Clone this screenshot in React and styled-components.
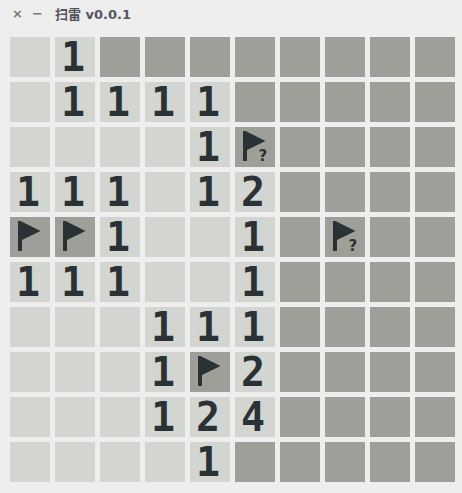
import React from 'react';
import styled, { createGlobalStyle } from 'styled-components';

const Global = createGlobalStyle`
  html, body { margin: 0; padding: 0; background: #eeeeee; }
`;

const Window = styled.div`
  width: 462px;
  height: 493px;
  overflow: hidden;
  background: #eeeeee;
`;

const TitleBar = styled.div`
  height: 37px;
  padding: 0 0 10px 12px;
  box-sizing: border-box;
  display: flex;
  align-items: center;
  color: #555560;
  font-family: "DejaVu Sans", "Noto Sans CJK SC", sans-serif;
`;

const Control = styled.span`
  width: 20px;
  font-size: 13px;
  font-weight: bold;
  color: #777;
  line-height: 1;
`;

const Title = styled.span`
  margin-left: 3px;
  font-size: 13px;
  font-weight: bold;
`;

const Board = styled.div`
  display: grid;
  grid-template-columns: repeat(10, 40px);
  grid-auto-rows: 40px;
  gap: 5px;
  padding-left: 10px;
`;

const Cell = styled.div`
  display: flex;
  align-items: center;
  justify-content: center;
  background: ${(p) => (p.$open ? '#d3d6d0' : '#9e9f99')};
  color: #2a3236;
  font-family: "DejaVu Sans Mono", monospace;
  font-weight: bold;
  font-size: 40px;
  line-height: 1;
`;

const Digit = styled.span`
  margin-right: 4px;
`;

const FlagIcon = ({ unsure }) => (
  <svg width="40" height="40" viewBox="0 0 40 40">
    <path d="M8 4 L10.500 4 L30.500 14 L12 23 L12 34 L8 34 Z" fill="#2a3236" />
    {unsure && (
      <text x="23.500" y="34" fontFamily="DejaVu Sans" fontWeight="bold" fontSize="15" fill="#2a3236">?</text>
    )}
  </svg>
);

const rows = [
  '.1cccccccc',
  '.1111ccccc',
  '....1?cccc',
  '111.12cccc',
  'FF1..1c?cc',
  '111..1cccc',
  '...111cccc',
  '...1F2cccc',
  '...124cccc',
  '....1ccccc',
];

export default function App() {
  return (
    <Window>
      <Global />
      <TitleBar>
        <Control>×</Control>
        <Control>−</Control>
        <Title>扫雷 v0.0.1</Title>
      </TitleBar>
      <Board>
        {rows.flatMap((row, r) =>
          row.split('').map((ch, c) => {
            const key = r + '-' + c;
            if (ch === 'c') return <Cell key={key} />;
            if (ch === 'F') return <Cell key={key}><FlagIcon /></Cell>;
            if (ch === '?') return <Cell key={key}><FlagIcon unsure /></Cell>;
            return <Cell key={key} $open>{ch !== '.' && <Digit>{ch}</Digit>}</Cell>;
          })
        )}
      </Board>
    </Window>
  );
}
